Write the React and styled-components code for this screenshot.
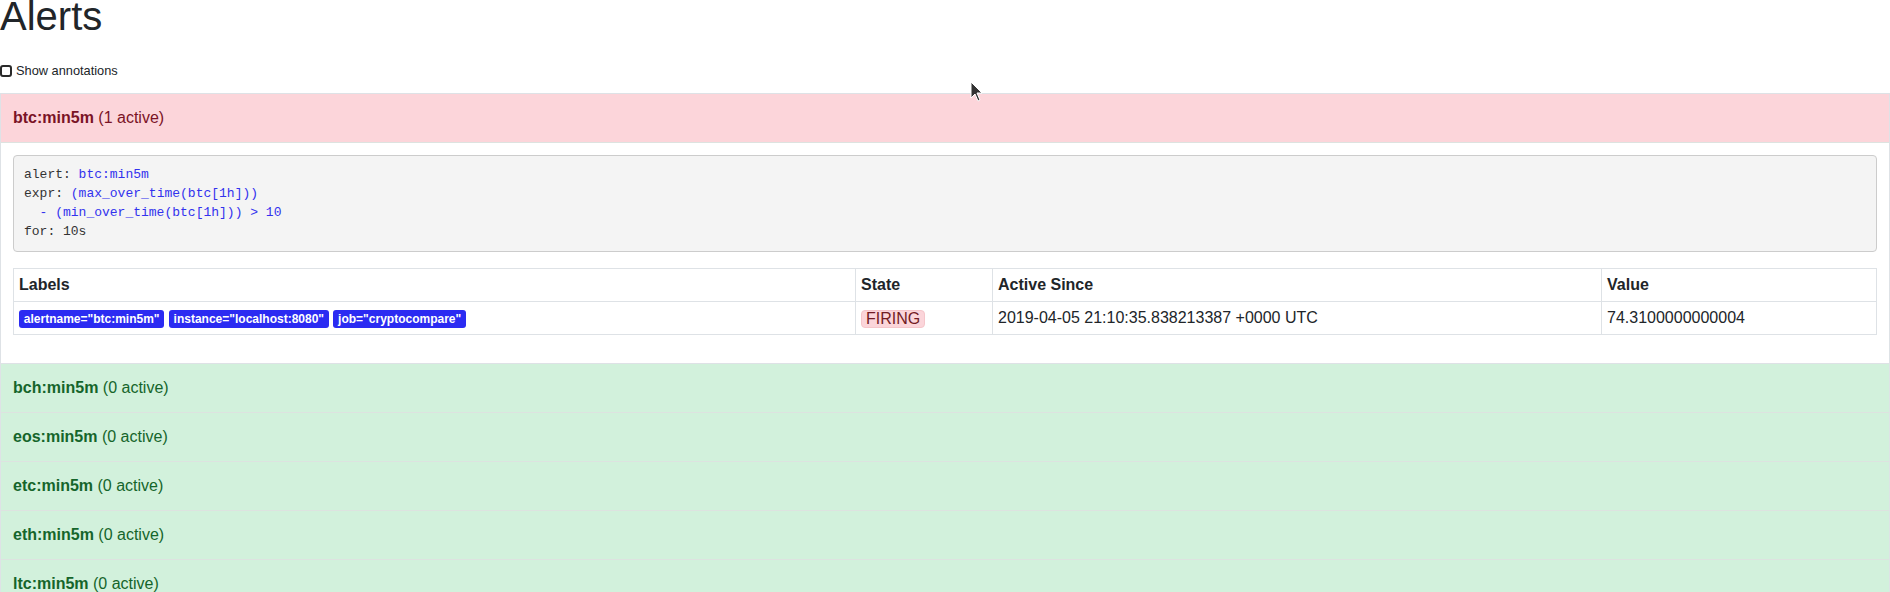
import React from 'react';
import styled, { createGlobalStyle } from 'styled-components';

const GlobalStyle = createGlobalStyle`
  html, body {
    margin: 0;
    padding: 0;
    background: #fff;
  }
  body {
    font-family: 'Liberation Sans', Arial, sans-serif;
    font-size: 16px;
    line-height: 1.5;
    color: #212529;
    overflow: hidden;
  }
`;

const Page = styled.div`
  position: relative;
`;

const Title = styled.h1`
  font-size: 40px;
  font-weight: 500;
  line-height: 48px;
  margin: -8px 0 21px;
`;

const CheckRow = styled.label`
  display: flex;
  align-items: center;
  height: 19px;
  margin-bottom: 13px;
  font-size: 12.8px;
  line-height: 19px;
`;

const Check = styled.input`
  appearance: none;
  width: 12px;
  height: 12px;
  margin: 1px 4px 0 0;
  border: 2px solid #2a2a2a;
  border-radius: 3px;
  box-sizing: border-box;
  background: #fff;
`;

const Groups = styled.div`
  border: 1px solid #dee2e6;
  border-bottom: none;
`;

const GroupHeader = styled.div`
  padding: 12px;
  line-height: 24px;
  font-size: 16px;
  border-bottom: 1px solid #dde3e0;
  background: ${p => (p.firing ? '#fcd5da' : '#d2f1dc')};
  color: ${p => (p.firing ? '#7a1326' : '#15652b')};

  strong {
    font-weight: 700;
  }
`;

const GroupBody = styled.div`
  padding: 12px;
  border-bottom: 1px solid #dee2e6;
  background: #fff;
`;

const RuleBlock = styled.pre`
  margin: 0 0 16px;
  padding: 9px 10px 10px;
  background: #f4f4f4;
  border: 1px solid #ccc;
  border-radius: 4px;
  font-family: 'Liberation Mono', 'DejaVu Sans Mono', monospace;
  font-size: 13px;
  line-height: 19px;
  color: #333;
`;

const Val = styled.span`
  color: #3232ee;
`;

const Table = styled.table`
  width: 100%;
  border-collapse: collapse;
  margin-bottom: 16px;
  table-layout: fixed;

  th, td {
    border: 1px solid #dee2e6;
    padding: 4px 5px;
    text-align: left;
    vertical-align: middle;
    line-height: 24px;
    white-space: nowrap;
  }
  th {
    font-weight: 700;
  }
`;

const LabelBadge = styled.span`
  display: inline-block;
  padding: 3px 4.8px;
  font-size: 12px;
  font-weight: 700;
  line-height: 1;
  color: #fff;
  background: #2b2bf2;
  border-radius: 3px;
  vertical-align: middle;
`;

const StateBadge = styled.span`
  display: inline-block;
  padding: 0 4px;
  line-height: 16px;
  font-size: 16px;
  color: #721c24;
  background: #fbd5da;
  border: 1px solid #f5c6cb;
  border-radius: 4px;
  vertical-align: middle;
`;

const Cursor = styled.svg`
  position: absolute;
  left: 970px;
  top: 89px;
  pointer-events: none;
`;

const labels = ['alertname="btc:min5m"', 'instance="localhost:8080"', 'job="cryptocompare"'];
const others = ['bch', 'eos', 'etc', 'eth', 'ltc'];

export default function App() {
  return (
    <Page>
      <GlobalStyle />
      <Title>Alerts</Title>
      <CheckRow>
        <Check type="checkbox" />
        Show annotations
      </CheckRow>

      <Groups>
        <GroupHeader firing>
          <strong>btc:min5m</strong> (1 active)
        </GroupHeader>
        <GroupBody>
          <RuleBlock>
            alert: <Val>btc:min5m</Val>{'\n'}
            expr: <Val>(max_over_time(btc[1h])){'\n'}  - (min_over_time(btc[1h])) &gt; 10</Val>{'\n'}
            for: 10s
          </RuleBlock>
          <Table>
            <colgroup>
              <col style={{ width: 842 }} />
              <col style={{ width: 137 }} />
              <col style={{ width: 609 }} />
              <col />
            </colgroup>
            <thead>
              <tr>
                <th>Labels</th>
                <th>State</th>
                <th>Active Since</th>
                <th>Value</th>
              </tr>
            </thead>
            <tbody>
              <tr>
                <td>
                  {labels.map((l, i) => (
                    <React.Fragment key={l}>
                      {i > 0 && ' '}
                      <LabelBadge>{l}</LabelBadge>
                    </React.Fragment>
                  ))}
                </td>
                <td><StateBadge>FIRING</StateBadge></td>
                <td>2019-04-05 21:10:35.838213387 +0000 UTC</td>
                <td>74.3100000000004</td>
              </tr>
            </tbody>
          </Table>
        </GroupBody>
        {others.map(name => (
          <GroupHeader key={name}>
            <strong>{name}:min5m</strong> (0 active)
          </GroupHeader>
        ))}
      </Groups>

      <Cursor width="14" height="22" viewBox="0 0 14 22">
        <path d="M1 1 L1 17 L5 13 L8 20 L10 19 L7 12 L12 12 Z" fill="#333" stroke="#fff" strokeWidth="1" />
      </Cursor>
    </Page>
  );
}
